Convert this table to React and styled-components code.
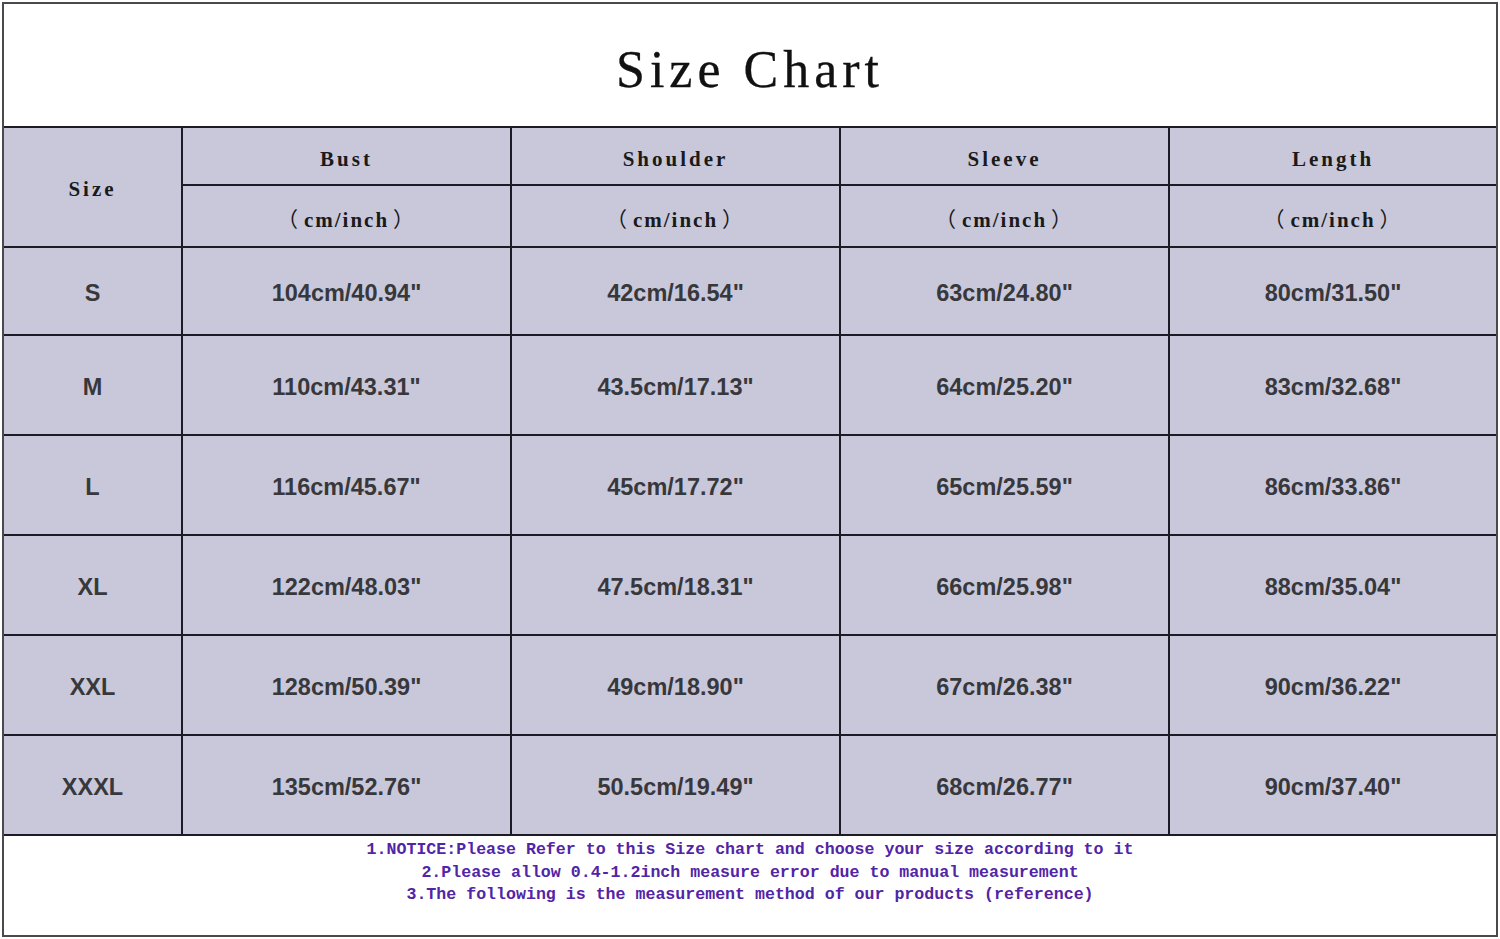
import React from 'react';
import styled, { createGlobalStyle } from 'styled-components';

const GlobalStyle = createGlobalStyle`
  html, body {
    margin: 0;
    padding: 0;
    background: #ffffff;
  }
  body {
    padding: 2px 0 0 2px;
  }
  * {
    box-sizing: border-box;
  }
`;

const Frame = styled.div`
  width: 1496px;
  height: 935px;
  border: 2px solid #4a4a4e;
  background: #ffffff;
  display: flex;
  flex-direction: column;
`;

const TitleBar = styled.div`
  height: 122px;
  display: flex;
  align-items: center;
  justify-content: center;
  padding-top: 9px;
`;

const Title = styled.h1`
  margin: 0;
  font-family: "Liberation Serif", "Times New Roman", serif;
  font-weight: normal;
  font-size: 52px;
  letter-spacing: 5px;
  color: #111;
  -webkit-text-stroke: 0.3px #111;
`;

const Table = styled.div`
  display: grid;
  grid-template-columns: 177px 327px 327px 327px 1fr;
  grid-template-rows: 56px 60px 86px repeat(5, 98px);
  gap: 2px;
  background: #1c1c26;
  border-top: 2px solid #1c1c26;
  border-bottom: 2px solid #1c1c26;
`;

const Cell = styled.div`
  background: #c8c8da;
  display: flex;
  align-items: center;
  justify-content: center;
  grid-row: ${(p) => (p.$rowSpan ? `span ${p.$rowSpan}` : 'auto')};
`;

const HeadText = styled.span`
  font-family: "Liberation Serif", "Noto Sans CJK SC", serif;
  font-weight: bold;
  font-size: 21px;
  letter-spacing: ${(p) => p.$spacing || 3}px;
  color: #1a1a1a;
  padding-top: ${(p) => p.$nudge || 0}px;
`;

const Paren = styled.span`
  font-family: "Noto Sans CJK SC", sans-serif;
  font-weight: normal;
  margin: 0 4px;
`;

const DataText = styled.span`
  font-family: "Liberation Sans", Arial, sans-serif;
  font-weight: bold;
  font-size: 23.5px;
  color: #38383c;
  padding-top: 4px;
`;

const Notes = styled.div`
  flex: 1;
  padding-top: 3px;
  text-align: center;
  font-family: "Liberation Mono", "DejaVu Sans Mono", monospace;
  font-weight: bold;
  font-size: 16.6px;
  line-height: 22.5px;
  color: #5224a6;
`;

const NoteLine = styled.div`
  white-space: pre;
`;

const measures = ['Bust', 'Shoulder', 'Sleeve', 'Length'];

const rows = [
  ['S', '104cm/40.94"', '42cm/16.54"', '63cm/24.80"', '80cm/31.50"'],
  ['M', '110cm/43.31"', '43.5cm/17.13"', '64cm/25.20"', '83cm/32.68"'],
  ['L', '116cm/45.67"', '45cm/17.72"', '65cm/25.59"', '86cm/33.86"'],
  ['XL', '122cm/48.03"', '47.5cm/18.31"', '66cm/25.98"', '88cm/35.04"'],
  ['XXL', '128cm/50.39"', '49cm/18.90"', '67cm/26.38"', '90cm/36.22"'],
  ['XXXL', '135cm/52.76"', '50.5cm/19.49"', '68cm/26.77"', '90cm/37.40"'],
];

const notes = [
  '1.NOTICE:Please Refer to this Size chart and choose your size according to it',
  '2.Please allow 0.4-1.2inch measure error due to manual measurement',
  '3.The following is the measurement method of our products (reference)',
];

const App = () => (
  <>
    <GlobalStyle />
    <Frame>
      <TitleBar>
        <Title>Size Chart</Title>
      </TitleBar>
      <Table>
        <Cell $rowSpan={2}>
          <HeadText $nudge={4}>Size</HeadText>
        </Cell>
        {measures.map((m) => (
          <Cell key={m}>
            <HeadText $nudge={6}>{m}</HeadText>
          </Cell>
        ))}
        {measures.map((m) => (
          <Cell key={`${m}-unit`}>
            <HeadText $spacing={2} $nudge={3}>
              <Paren>（</Paren>cm/inch<Paren>）</Paren>
            </HeadText>
          </Cell>
        ))}
        {rows.map((row) =>
          row.map((value, i) => (
            <Cell key={`${row[0]}-${i}`}>
              <DataText>{value}</DataText>
            </Cell>
          ))
        )}
      </Table>
      <Notes>
        {notes.map((n) => (
          <NoteLine key={n}>{n}</NoteLine>
        ))}
      </Notes>
    </Frame>
  </>
);

export default App;
